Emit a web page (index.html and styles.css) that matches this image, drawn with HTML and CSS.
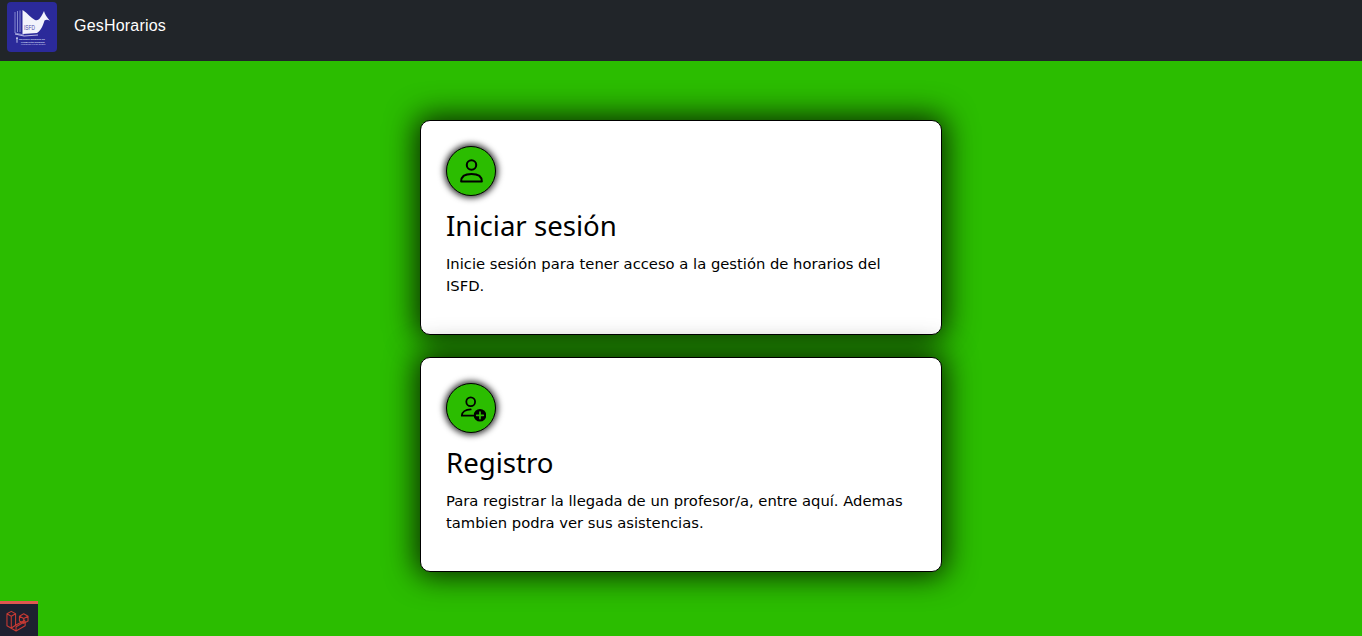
FILE: index.html
```html
<!DOCTYPE html>
<html lang="es">
<head>
<meta charset="utf-8">
<title>GesHorarios</title>
<link rel="stylesheet" href="styles.css">
</head>
<body>
<header class="topbar">
  <div class="logo">
    <svg viewBox="0 0 50 50" width="50" height="50">
      <rect width="50" height="50" rx="4" fill="#2b2a9a"/>
      <path d="M8 10v21l9 2" fill="none" stroke="#aab0e6" stroke-width=".7"/>
      <path d="M10.500 9v21M13 8.500v21.500" fill="none" stroke="#aab0e6" stroke-width=".7"/>
      <path d="M15.500 8c5 3 8.500 8 12.500 10 4 1.500 6-3 9-9 .5 3 3 6 6 10-2-1.500-4-1.500-5.500-.5-2 6-3.500 10-7.500 12.500l-14.500 1z" fill="#f2f3fb"/>
      <text x="17" y="27.500" class="logo-isfd" textLength="11" lengthAdjust="spacingAndGlyphs">ISFD</text>
      <path d="M8 32l9 2 14-1" fill="none" stroke="#dfe1f7" stroke-width=".8"/>
      <text x="12" y="37.500" class="logo-small">INSTITUTO SUPERIOR DE</text>
      <text x="14" y="40.500" class="logo-small">FORMACIÓN DOCENTE</text>
      <text x="14" y="43" class="logo-tiny">PROFESOR MIGUEL BUENO</text>
      <path d="M9 35.500h2v1l-.6.3v4h-.8v-4l-.6-.3z" fill="#dfe1f7"/>
    </svg>
  </div>
  <a class="brand" href="#">GesHorarios</a>
</header>

<main class="content">
  <section class="card">
    <div class="icon-circle">
      <svg viewBox="0 0 24 24" width="27" height="27" fill="none" stroke="#000" stroke-width="1.800" stroke-linecap="round" stroke-linejoin="round">
        <circle cx="12" cy="6.200" r="4.200"/>
        <path d="M2.800 20.800c0-4.400 3.800-6.600 9.200-6.600s9.200 2.200 9.200 6.600z"/>
      </svg>
    </div>
    <h2 class="card-title">Iniciar sesión</h2>
    <p class="card-text">Inicie sesión para tener acceso a la gestión de horarios del ISFD.</p>
  </section>

  <section class="card">
    <div class="icon-circle">
      <svg viewBox="0 0 30 30" width="30" height="30" fill="none" stroke="#000" stroke-width="1.800" stroke-linecap="round" stroke-linejoin="round">
        <circle cx="14.700" cy="8.700" r="4.400"/>
        <path d="M5.800 22.700c0-3.800 3.800-6.300 8.900-6.300M5.800 22.700h11.500"/>
        <circle cx="24" cy="22.300" r="6.300" fill="#000" stroke="none"/>
        <path d="M24 19v6.600M20.700 22.300h6.600" stroke="#2bbd00" stroke-width="1.700"/>
      </svg>
    </div>
    <h2 class="card-title">Registro</h2>
    <p class="card-text">Para registrar la llegada de un profesor/a, entre aquí. Ademas tambien podra ver sus asistencias.</p>
  </section>
</main>

<a class="laravel-badge" href="#">
  <svg viewBox="0 0 24 24" width="23" height="23" fill="none" stroke="#c93a33" stroke-width="1.100" stroke-linejoin="round">
    <path d="M1 5 5.500 2.500 10 5 5.500 7.500zM1 5v12.500L10.500 23l9.500-5.500v-5M5.500 7.500v12.500M10 5v12l-4.500 2.800M10 17l10-5.500M10.500 23v-4.500L20 13"/>
    <path d="M14 7.500 18.500 5 23 7.500 18.500 10zM14 7.500v5l4.500 2.500M23 7.500v5L18.500 15v-5"/>
  </svg>
</a>
</body>
</html>
```

FILE: styles.css
```css
* { box-sizing: border-box; }

html, body { height: 100%; }

body {
  margin: 0;
  background: #2bbd00;
  font-family: "DejaVu Sans", Verdana, sans-serif;
  color: #000;
  overflow: hidden;
}

.topbar {
  height: 61px;
  background: #212529;
  display: flex;
  align-items: flex-start;
  padding: 2px 0 0 7px;
  gap: 17px;
}

.logo { width: 50px; height: 50px; }
.logo svg { display: block; }

.logo-isfd {
  font-family: "Liberation Sans", sans-serif;
  font-size: 7px;
  fill: #4a4aa8;
}
.logo-small {
  font-family: "Liberation Sans", sans-serif;
  font-size: 2.100px;
  font-weight: 700;
  fill: #dfe1f7;
}
.logo-tiny {
  font-family: "Liberation Sans", sans-serif;
  font-size: 1.800px;
  fill: #c9cdf0;
}

.brand {
  color: #fff;
  font-family: "Liberation Sans", sans-serif;
  font-size: 16px;
  letter-spacing: .2px;
  line-height: 48px;
  text-decoration: none;
}

.content {
  display: flex;
  flex-direction: column;
  align-items: center;
  gap: 22px;
  padding-top: 59px;
}

.card {
  width: 522px;
  height: 215px;
  background: #fff;
  border: 1px solid #000;
  border-radius: 10px;
  padding: 25px;
  box-shadow: 0 0 30px 4px rgba(0, 0, 0, .8);
}

.icon-circle {
  width: 50px;
  height: 50px;
  border-radius: 50%;
  background: #2bbd00;
  border: 1px solid #000;
  box-shadow: 0 0 6px 2px rgba(0, 0, 0, .8);
  display: flex;
  align-items: center;
  justify-content: center;
}
.icon-circle svg { display: block; }

.card-title {
  margin: 12px 0 0;
  font-family: "Noto Sans", "Open Sans", sans-serif;
  font-weight: 400;
  font-size: 27.600px;
  line-height: 34px;
}

.card-text {
  margin: 10.500px 0 0;
  font-size: 14.750px;
  line-height: 22.500px;
}

.laravel-badge {
  position: fixed;
  left: 0;
  bottom: 0;
  width: 38px;
  height: 35px;
  background: #1e2030;
  border-top: 3px solid #e0584f;
  display: flex;
  align-items: center;
  justify-content: center;
  padding-right: 3px;
}
```
